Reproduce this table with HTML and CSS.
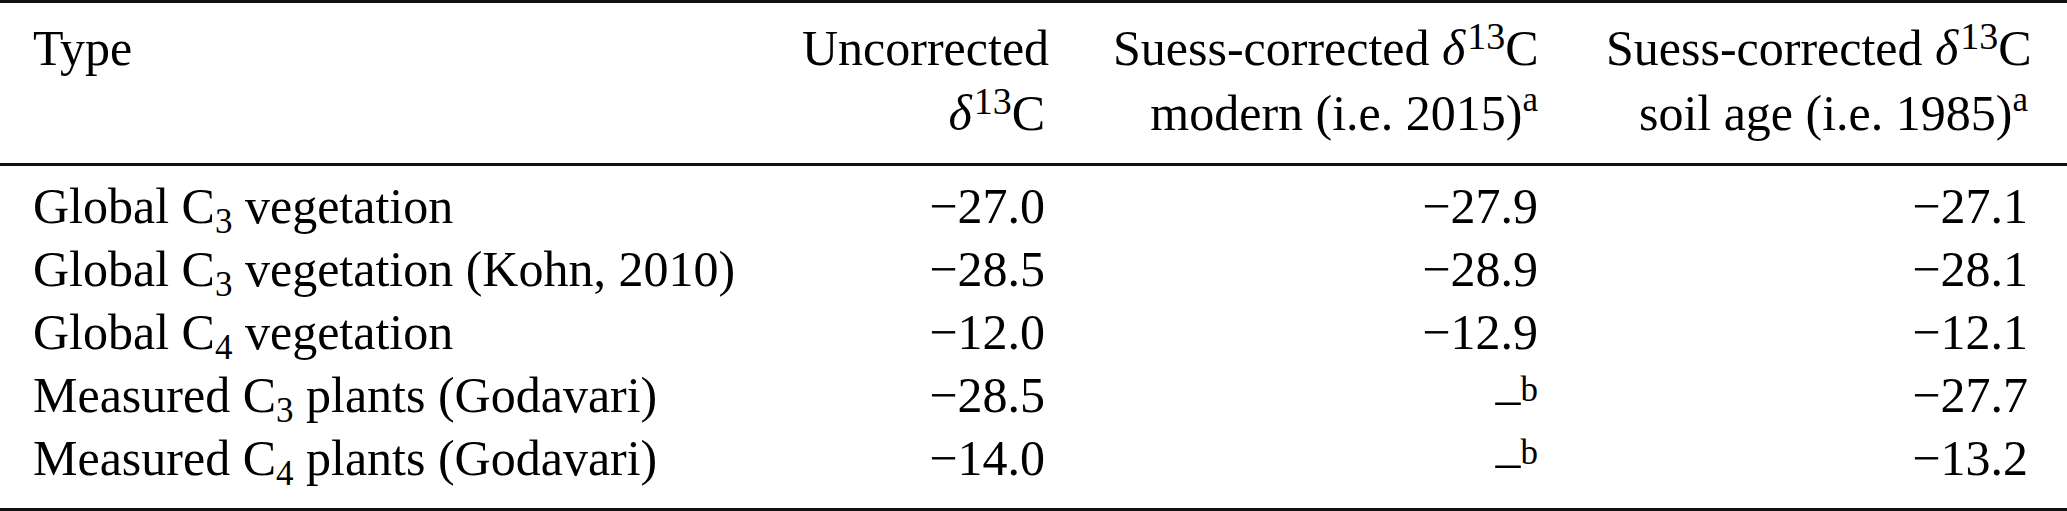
FILE: index.html
```html
<!DOCTYPE html>
<html lang="en">

<head>
  <meta charset="UTF-8">
  <title>Carbon isotope end-members</title>
  <link rel="stylesheet" href="styles.css">
</head>

<body>

  <!-- End-member table -->
  <table class="iso-table">
    <colgroup>
      <col class="col-type">
      <col class="col-raw">
      <col class="col-modern">
      <col class="col-soil">
    </colgroup>
    <thead>
      <tr>
        <th class="cell-label">Type</th>
        <th class="cell-num">Uncorrected<br><i class="delta">δ</i><sup class="up">13</sup>C</th>
        <th class="cell-num">Suess-corrected <i class="delta">δ</i><sup class="up">13</sup>C<br>modern (i.e. 2015)<sup class="note">a</sup></th>
        <th class="cell-num">Suess-corrected <i class="delta">δ</i><sup class="up">13</sup>C<br>soil age (i.e. 1985)<sup class="note">a</sup></th>
      </tr>
    </thead>
    <tbody>
      <tr>
        <td class="cell-label">Global C<sub class="down">3</sub> vegetation</td>
        <td class="cell-num">−27.0</td>
        <td class="cell-num">−27.9</td>
        <td class="cell-num">−27.1</td>
      </tr>
      <tr>
        <td class="cell-label">Global C<sub class="down">3</sub> vegetation (Kohn, 2010)</td>
        <td class="cell-num">−28.5</td>
        <td class="cell-num">−28.9</td>
        <td class="cell-num">−28.1</td>
      </tr>
      <tr>
        <td class="cell-label">Global C<sub class="down">4</sub> vegetation</td>
        <td class="cell-num">−12.0</td>
        <td class="cell-num">−12.9</td>
        <td class="cell-num">−12.1</td>
      </tr>
      <tr>
        <td class="cell-label">Measured C<sub class="down">3</sub> plants (Godavari)</td>
        <td class="cell-num">−28.5</td>
        <td class="cell-num"><span class="missing">–</span><sup class="mark">b</sup></td>
        <td class="cell-num">−27.7</td>
      </tr>
      <tr>
        <td class="cell-label">Measured C<sub class="down">4</sub> plants (Godavari)</td>
        <td class="cell-num">−14.0</td>
        <td class="cell-num"><span class="missing">–</span><sup class="mark">b</sup></td>
        <td class="cell-num">−13.2</td>
      </tr>
    </tbody>
  </table>

</body>

</html>
```

FILE: styles.css
```css
* {
  box-sizing: border-box;
}

body {
  margin: 0;
  background: #fff;
  color: #000;
  font-family: "Liberation Serif", "Times New Roman", serif;
  font-size: 50px;
}

.iso-table {
  width: 100%;
  table-layout: fixed;
  border-collapse: separate;
  border-spacing: 0;
}

.col-type {
  width: 768px;
}

.col-raw {
  width: 311px;
}

.col-modern {
  width: 493px;
}

.col-soil {
  width: 495px;
}

.iso-table th,
.iso-table td {
  padding: 0 34px;
  font-weight: normal;
  white-space: nowrap;
}

.iso-table th {
  vertical-align: top;
  line-height: 65px;
  padding-top: 13px;
  padding-bottom: 17px;
  border-top: 3px solid #111;
  border-bottom: 3px solid #111;
}

.iso-table td {
  line-height: 63px;
}

.iso-table tbody tr:first-child td {
  padding-top: 9px;
}

.iso-table tbody tr:last-child td {
  padding-bottom: 18px;
  border-bottom: 3px solid #111;
}

.cell-label {
  text-align: left;
}

.iso-table .cell-label {
  padding-left: 33px;
}

.cell-num {
  text-align: right;
}

.iso-table tr > :last-child {
  padding-right: 39px;
}

.delta {
  font-style: italic;
}

sup,
sub {
  font-size: 35px;
  line-height: 0;
}

.up {
  font-size: 38px;
  vertical-align: 16px;
  margin-left: 2px;
}

.note {
  vertical-align: 19px;
}

.down {
  vertical-align: -10px;
}

.missing {
  line-height: 0;
  vertical-align: -4px;
}

.mark {
  vertical-align: 11px;
}
```
